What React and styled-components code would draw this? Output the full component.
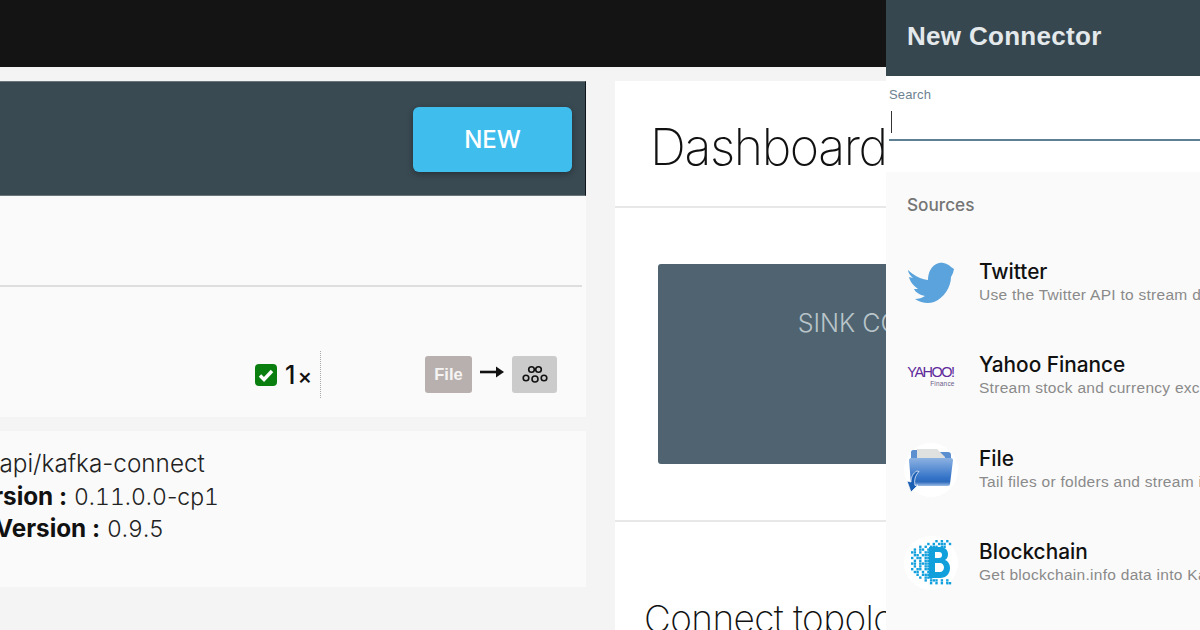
import React from 'react';
import styled, { createGlobalStyle } from 'styled-components';

const Global = createGlobalStyle`
  html, body { margin: 0; padding: 0; height: 630px; overflow: hidden; background: #f4f4f4; }
  body { font-family: "Liberation Sans", Arial, sans-serif; color: #111; }
  * { box-sizing: border-box; }
`;
const Page = styled.div`position: relative; width: 1200px; height: 630px; overflow: hidden; background: #f4f4f4;`;
const TopBar = styled.div`height: 67px; background: #141414;`;
const Main = styled.div`display: grid; grid-template-columns: 586px 1fr; column-gap: 29px; padding-top: 14px;`;
const LeftCol = styled.div`display: flex; flex-direction: column; gap: 14px;`;
const Panel = styled.section`background: #fafafa;`;
const PanelHeader = styled.header`
  height: 115px; background: #3a4a52; border-top: 1px solid #6a767c; border-bottom: 1px solid #6a767c; border-right: 1px solid #10141c;
  display: flex; align-items: center; justify-content: flex-end; padding: 1px 13px 0 0;
`;
const NewButton = styled.button`
  width: 159px; height: 65px; border: 0; border-radius: 6px; background: #3fbeee; color: #fff;
  font: 500 24px Inter, sans-serif; box-shadow: 0 2px 6px rgba(0,0,0,.35); padding: 0;
`;
const Divider = styled.div`margin-top: 89px; height: 2px; width: 582px; background: #dedede;`;
const StatusRow = styled.div`height: 130px; display: flex; align-items: center; padding: 45px 29px 0 255px;`;
const Count = styled.div`display: flex; align-items: baseline; margin-left: 8px; font: 500 25px Inter, sans-serif; color: #111; span { font-size: 22px; margin-left: 2px; }`;
const DottedSep = styled.div`height: 47px; margin-left: 8px; border-left: 1px dotted #aaa; margin-right: auto;`;
const Badge = styled.div`
  height: 37px; width: ${p => p.$w}px; border-radius: 3px; background: ${p => p.$bg}; color: #f6f4f3;
  display: flex; align-items: center; justify-content: center; font: 700 16.5px "Liberation Sans", Arial, sans-serif;
`;
const ArrowBox = styled.div`width: 40px; display: flex; justify-content: center;`;
const Details = styled.div`height: 156px; padding-top: 16px; font: 300 24.3px/32.5px Inter, sans-serif; color: #222; white-space: nowrap; overflow: hidden;`;
const Line = styled.div`margin-left: ${p => p.$shift}px; height: 32.5px;`;
const Strong = styled.strong`font-weight: 700; color: #111;`;
const Value = styled.span`font-size: 23px; line-height: 1; font-feature-settings: "tnum";`;
const Plain = styled.span`font-feature-settings: normal;`;
const Card = styled.section`background: #fff; height: 560px;`;
const CardTitleRow = styled.div`height: 127px; border-bottom: 2px solid #e8e8e8; padding: 36px 0 0 35px;`;
const Title = styled.h1`margin: 0; font: 200 50px/60px Inter, sans-serif; color: #111; letter-spacing: -1.4px; white-space: nowrap;`;
const StatsSection = styled.div`height: 314px; border-bottom: 2px solid #e8e8e8; padding: 56px 0 0 43px;`;
const SinkBox = styled.div`
  width: 518px; height: 200px; background: #4f6470; border-radius: 3px; color: #b9c4ca; text-align: center;
  font: 300 25px/118px Inter, sans-serif; white-space: nowrap;
`;
const Subtitle = styled.h2`margin: 75px 0 0 29px; font: 200 37px/44px Inter, sans-serif; color: #111; letter-spacing: -.6px; white-space: nowrap;`;
const Drawer = styled.aside`position: absolute; top: 0; left: 886px; width: 314px; height: 630px; background: #fff; overflow: hidden;`;
const DrawerHeader = styled.header`height: 76px; background: #37474f; color: #e4e9ec; font: 700 26px/72px "Liberation Sans", Arial, sans-serif; padding-left: 21px; letter-spacing: .3px;`;
const SearchBox = styled.div`height: 96px; padding: 11px 0 0 3px;`;
const SearchLabel = styled.label`display: block; font: 400 13px/16px "Liberation Sans", Arial, sans-serif; color: #6d8290; letter-spacing: .15px;`;
const SearchField = styled.div`height: 30px; margin-top: 8px; border-bottom: 2px solid #5f7f92; padding-left: 2px;`;
const Caret = styled.div`width: 1px; height: 22px; background: #333;`;
const Sources = styled.div`background: #fafafa; height: 458px; padding: 22px 0 0 21px;`;
const SourcesTitle = styled.h3`margin: 0 0 32px; font: 500 17.2px/21px Inter, sans-serif; color: #757575;`;
const Item = styled.div`display: flex; align-items: flex-start; height: 93.3px; white-space: nowrap;`;
const IconWrap = styled.div`width: 48px; height: 62px; display: flex; align-items: center; justify-content: center; flex: none; margin: 5px 24px 0 0;`;
const Bubble = styled.div`width: 54px; height: 54px; border-radius: 50%; background: #fff; display: flex; align-items: center; justify-content: center; flex: none;`;
const ItemText = styled.div`padding-top: 13px;`;
const ItemTitle = styled.div`font: 500 20.8px/24px Inter, "Liberation Sans", sans-serif; color: #111;`;
const ItemDesc = styled.div`font: 400 15.5px/21px "Liberation Sans", Arial, sans-serif; color: #8a8a8a; letter-spacing: .28px;`;
const Yahoo = styled.div`display: flex; flex-direction: column; align-items: flex-end; color: #5f2b9b; line-height: 1;`;
const YahooWord = styled.div`font: 400 14.5px/15px "Liberation Sans", Arial, sans-serif; letter-spacing: -1.5px; margin-right: 1px;`;
const YahooSub = styled.div`font: 400 6.5px/8px "Liberation Sans", Arial, sans-serif; letter-spacing: .2px; color: #6a5a88;`;

const Check = () => (
  <svg width="22" height="22" viewBox="0 0 22 22"><rect width="22" height="22" rx="4" fill="#0a7f10"/><path d="M5 11.5l4 4 8-8.5" fill="none" stroke="#fff" strokeWidth="3.4"/></svg>
);
const Arrow = () => (
  <svg width="26" height="16" viewBox="0 0 26 16" style={{ marginTop: -6 }}><path d="M1 8h18" stroke="#111" strokeWidth="2.6"/><path d="M17 2.5L25 8l-8 5.5z" fill="#111"/></svg>
);
const Cluster = () => (
  <svg width="28" height="24" viewBox="0 0 28 24" fill="none" stroke="#111" strokeWidth="1.6">
    <circle cx="10.5" cy="6.5" r="2.8"/><circle cx="17.5" cy="6.5" r="2.8"/>
    <circle cx="5" cy="15" r="2.8"/><circle cx="14" cy="16" r="3"/><circle cx="23" cy="15" r="2.8"/>
  </svg>
);
const Bird = () => (
  <svg width="47" height="42" viewBox="0 0 47 42">
    <path fill="#5aa3dc" d="M0 8C5 13 12 17 20 18 20 11 23 3 31 1 36 0 41 3 43 5L46 7 45 11 43 15C43 25 36 36 26 40 20 42 13 41 7 37 11 37 14 36 17 34 12 33 7 30 6 27H10C6 24 2 20 1 15L5 16C2 13 0 11 0 8Z"/>
  </svg>
);
const Folder = () => (
  <svg width="50" height="48" viewBox="0 0 50 48">
    <defs>
      <linearGradient id="fb" x1="0" y1="0" x2="0" y2="1"><stop offset="0" stopColor="#8db2e2"/><stop offset=".7" stopColor="#3474c8"/><stop offset=".85" stopColor="#2d6abc"/><stop offset="1" stopColor="#9dbde6"/></linearGradient>
    </defs>
    <path d="M7 4h8l3 2h24c2 0 3 1 3 3v12H5V6c0-1 1-2 2-2z" fill="#5c8fd0"/>
    <path d="M11 3h20l8 8v14H11z" fill="#dfe1e0"/>
    <path d="M3 14c0-1 1-2 2-2h40c1 0 2 1 2 2l-3 24c0 1-1 2-2 2H7c-1 0-2-1-2-2z" fill="url(#fb)"/>
    <path d="M11 25c-4 2-6 6-6 11L1 35l4 11 7-7-3 .5c-1-5 0-10 4-14z" fill="#1b5fb4" stroke="#fff" strokeWidth=".7"/>
  </svg>
);
const PIXELS = [
  '.........#.#.#.',
  '......#.#.###.#',
  '...#.#.###.##..',
  '.#.##.###......',
  '##.#.###.......',
  '.##.####.......',
  '#.##.###.......',
  '.#.#.###.......',
  '##.####........',
  '.#.#.###.......',
  '#.##.###.......',
  '.##.#.##.......',
  '..#.####.......',
  '...#.###.......',
  '.....#.###.#.#.',
  '.......#.#.#.##',
];
const Blockchain = () => (
  <svg width="41" height="46" viewBox="0 0 41 46" fill="#12a0dc">
    {PIXELS.flatMap((row, y) => [...row].map((c, x) => c === '#' ? <rect key={`${x}-${y}`} x={x * 2.7} y={y * 2.8} width="2.4" height="2.4"/> : null))}
    <path fillRule="evenodd" d="M18 7h11c5 0 8 3 8 7 0 3-1 5-3 6 3 1 5 4 5 8 0 6-4 10-10 10H18zM24 12v6h4c2 0 3-1 3-3s-1-3-3-3zM24 23v9h5c2 0 4-2 4-4.5s-2-4.5-4-4.5z"/>
  </svg>
);

const items = [
  ['Twitter', 'Use the Twitter API to stream data into Kafka', <Bird />],
  ['Yahoo Finance', 'Stream stock and currency exchange data', <Yahoo><YahooWord>YAHOO!</YahooWord><YahooSub>Finance</YahooSub></Yahoo>],
  ['File', 'Tail files or folders and stream into Kafka', <Bubble><Folder /></Bubble>],
  ['Blockchain', 'Get blockchain.info data into Kafka', <Bubble><Blockchain /></Bubble>],
];

export default function App() {
  return (
    <Page>
      <Global />
      <TopBar />
      <Main>
        <LeftCol>
          <Panel>
            <PanelHeader><NewButton>NEW</NewButton></PanelHeader>
            <Divider />
            <StatusRow>
              <Check />
              <Count>1<span>×</span></Count>
              <DottedSep />
              <Badge $w={47} $bg="#b8b0ae">File</Badge>
              <ArrowBox><Arrow /></ArrowBox>
              <Badge $w={45} $bg="#cbcbcb"><Cluster /></Badge>
            </StatusRow>
          </Panel>
          <Panel>
            <Details>
              <Line $shift={-9}>/api/kafka-connect</Line>
              <Line $shift={-38}><Strong>Version :</Strong> <Value>0.11.0.0<Plain>-</Plain>cp1</Value></Line>
              <Line $shift={-5}><Strong>Version :</Strong> <Value>0.9.5</Value></Line>
            </Details>
          </Panel>
        </LeftCol>
        <Card>
          <CardTitleRow><Title>Dashboard</Title></CardTitleRow>
          <StatsSection><SinkBox>SINK CONNECTORS</SinkBox></StatsSection>
          <Subtitle>Connect topology</Subtitle>
        </Card>
      </Main>
      <Drawer>
        <DrawerHeader>New Connector</DrawerHeader>
        <SearchBox>
          <SearchLabel>Search</SearchLabel>
          <SearchField><Caret /></SearchField>
        </SearchBox>
        <Sources>
          <SourcesTitle>Sources</SourcesTitle>
          {items.map(([t, d, icon]) => (
            <Item key={t}>
              <IconWrap>{icon}</IconWrap>
              <ItemText><ItemTitle>{t}</ItemTitle><ItemDesc>{d}</ItemDesc></ItemText>
            </Item>
          ))}
        </Sources>
      </Drawer>
    </Page>
  );
}
